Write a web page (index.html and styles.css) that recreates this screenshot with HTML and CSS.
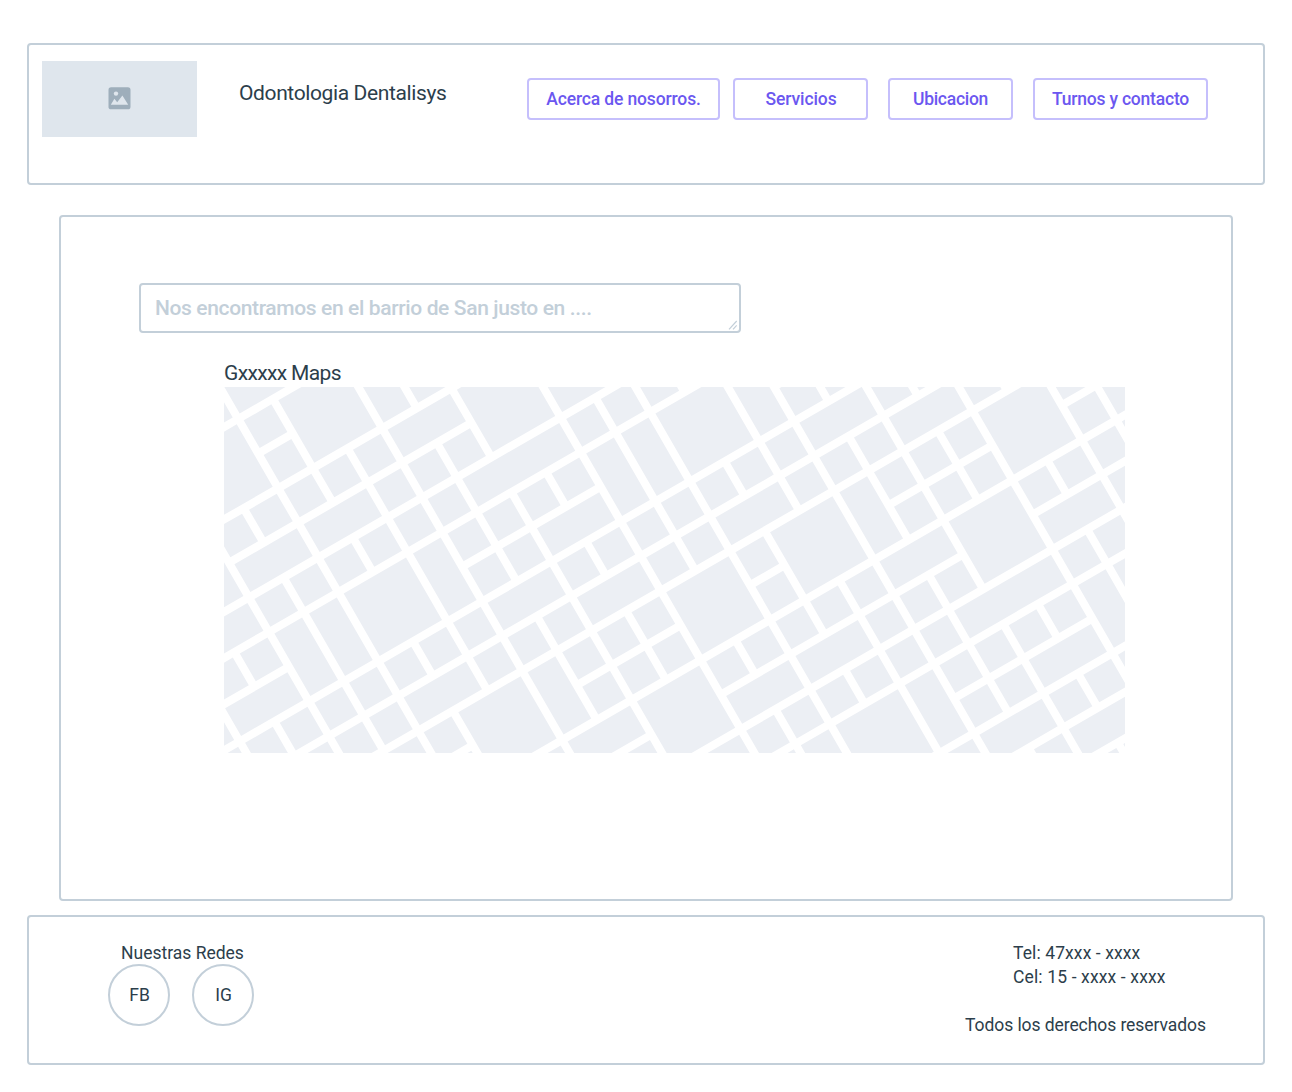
FILE: index.html
```html
<!DOCTYPE html>
<html lang="es">
<head>
<meta charset="utf-8">
<title>Odontologia Dentalisys</title>
<link rel="stylesheet" href="styles.css">
</head>
<body>
<header class="panel header">
  <div class="logo">
    <svg width="23" height="23" viewBox="0 0 23 23"><rect x=".5" y=".3" width="22" height="22" rx="2.6" fill="#9eaebb"/><circle cx="8" cy="6.6" r="2.2" fill="#dfe6ed"/><path d="M2.8 17.8 6.4 11.8l2.8 3.5L14.4 8.4l5.8 9.4z" fill="#dfe6ed"/></svg>
  </div>
  <h1 class="brand">Odontologia Dentalisys</h1>
  <nav class="nav">
    <a class="btn btn-about">Acerca de nosorros.</a>
    <a class="btn btn-services">Servicios</a>
    <a class="btn btn-location">Ubicacion</a>
    <a class="btn btn-contact">Turnos y contacto</a>
  </nav>
</header>
<main class="panel main">
  <div class="field">
    <span>Nos encontramos en el barrio de San justo en ....</span>
    <svg class="grip" width="10" height="10" viewBox="0 0 10 10"><path d="M1 9.3 8.7 1M5 9.3 8.7 5.3" stroke="#c3cfd9" stroke-width="1.2" fill="none"/></svg>
  </div>
  <section class="map">
    <h2 class="map-title">Gxxxxx Maps</h2>
    <svg class="map-canvas" width="901" height="366" viewBox="0 0 901 366">
      <defs>
        <path id="blocks" d="M4 4h32v32h-32zM44 4h72v72h-72zM124 4h32v72h-32zM164 4h32v32h-32zM204 4h32v32h-32zM244 4h32v32h-32zM284 4h72v72h-72z
          M4 44h32v32h-32zM164 44h32v32h-32zM204 44h32v32h-32zM244 44h32v32h-32z
          M4 84h32v32h-32zM44 84h32v32h-32zM84 84h32v32h-32zM124 84h72v32h-72zM204 84h72v72h-72zM284 84h32v32h-32zM324 84h32v32h-32z
          M4 124h72v32h-72zM84 124h32v32h-32zM124 124h32v32h-32zM164 124h32v32h-32zM284 124h72v32h-72z
          M4 164h32v32h-32zM44 164h32v32h-32zM84 164h32v32h-32zM124 164h32v32h-32zM164 164h112v32h-112zM284 164h32v32h-32zM324 164h32v32h-32z
          M4 204h72v72h-72zM84 204h32v72h-32zM124 204h32v32h-32zM164 204h32v32h-32zM204 204h32v32h-32zM244 204h32v32h-32zM284 204h32v72h-32zM324 204h32v72h-32z
          M124 244h32v32h-32zM164 244h32v32h-32zM204 244h72v32h-72z
          M4 284h32v32h-32zM44 284h32v32h-32zM84 284h32v32h-32zM124 284h72v32h-72zM204 284h32v32h-32zM244 284h32v32h-32zM284 284h32v32h-32zM324 284h32v32h-32z
          M4 324h72v32h-72zM84 324h32v32h-32zM124 324h32v32h-32zM164 324h32v32h-32zM204 324h72v32h-72zM284 324h32v32h-32zM324 324h32v32h-32z"/>
        <g id="strip"><use href="#blocks" x="-360"/><use href="#blocks"/><use href="#blocks" x="360"/><use href="#blocks" x="720"/></g>
      </defs>
      <g fill="#eceff4" transform="translate(-.7 .1) rotate(-30) translate(-3 35)">
        <use href="#strip" y="-360"/><use href="#strip"/><use href="#strip" y="360"/><use href="#strip" y="720"/>
      </g>
    </svg>
  </section>
</main>
<footer class="panel footer">
  <div class="social">
    <p class="social-title">Nuestras Redes</p>
    <div class="social-links"><a class="round">FB</a><a class="round">IG</a></div>
  </div>
  <div class="contact">
    <p class="phone tel">Tel: 47xxx - xxxx</p>
    <p class="phone cel">Cel: 15 - xxxx - xxxx</p>
    <p class="rights">Todos los derechos reservados</p>
  </div>
</footer>
</body>
</html>
```
FILE: styles.css
```css
* { box-sizing: border-box; }
body {
  margin: 0;
  padding: 43px 27px 27px;
  background: #fff;
  color: #2c3e4b;
  font-family: Roboto, "Liberation Sans", sans-serif;
  font-size: 17.5px;
  line-height: 24px;
}
h1, h2, p { margin: 0; font-weight: 400; white-space: nowrap; }
.panel { border: 2px solid #c3cfd9; border-radius: 4px; }
.header { display: flex; align-items: flex-start; height: 142px; padding: 16px 13px; }
.logo {
  display: flex; align-items: center; justify-content: center;
  width: 155px; height: 76px; padding-bottom: 1px; background: #dfe6ed;
}
.brand { width: 288px; margin: 18px 0 0 42px; font-size: 21px; line-height: 28px; letter-spacing: -.38px; }
.nav { display: flex; margin-top: 17px; }
.btn {
  display: flex; align-items: center; justify-content: center;
  height: 42px; border: 2px solid #c5bffc; border-radius: 4px;
  color: #6b57f0; font-weight: 500; white-space: nowrap;
}
.btn-about { width: 193px; margin-right: 13px; letter-spacing: -.14px; }
.btn-services { width: 135px; margin-right: 20px; padding-left: 1px; letter-spacing: -.1px; }
.btn-location { width: 125px; margin-right: 20px; letter-spacing: -.28px; }
.btn-contact { width: 175px; letter-spacing: -.2px; }
.main { height: 686px; margin: 30px 32px 14px; padding: 66px 78px; }
.field {
  position: relative; display: flex; align-items: center;
  width: 602px; height: 50px; padding-left: 14px;
  border: 2px solid #c3cfd9; border-radius: 4px;
  color: #c3cfd9; font-size: 21px; font-weight: 500; letter-spacing: -.37px; white-space: nowrap;
}
.grip { position: absolute; right: 1px; bottom: 1px; }
.map { margin: 26px 0 0 85px; }
.map-title { font-size: 21px; line-height: 28px; letter-spacing: -.65px; }
.map-canvas { display: block; }
.footer { display: flex; justify-content: space-between; height: 150px; padding: 24px 57px 0 79px; }
.social-title { padding-left: 13px; }
.social-links { display: flex; gap: 22px; margin-top: -1px; }
.round {
  display: flex; align-items: center; justify-content: center;
  width: 62px; height: 62px; padding-left: 1px; border: 2px solid #c3cfd9; border-radius: 50%;
}
.contact { width: 241px; }
.phone { padding-left: 48px; }
.tel { letter-spacing: .1px; }
.cel { letter-spacing: .14px; }
.rights { margin-top: 24px; letter-spacing: -.07px; }
```
